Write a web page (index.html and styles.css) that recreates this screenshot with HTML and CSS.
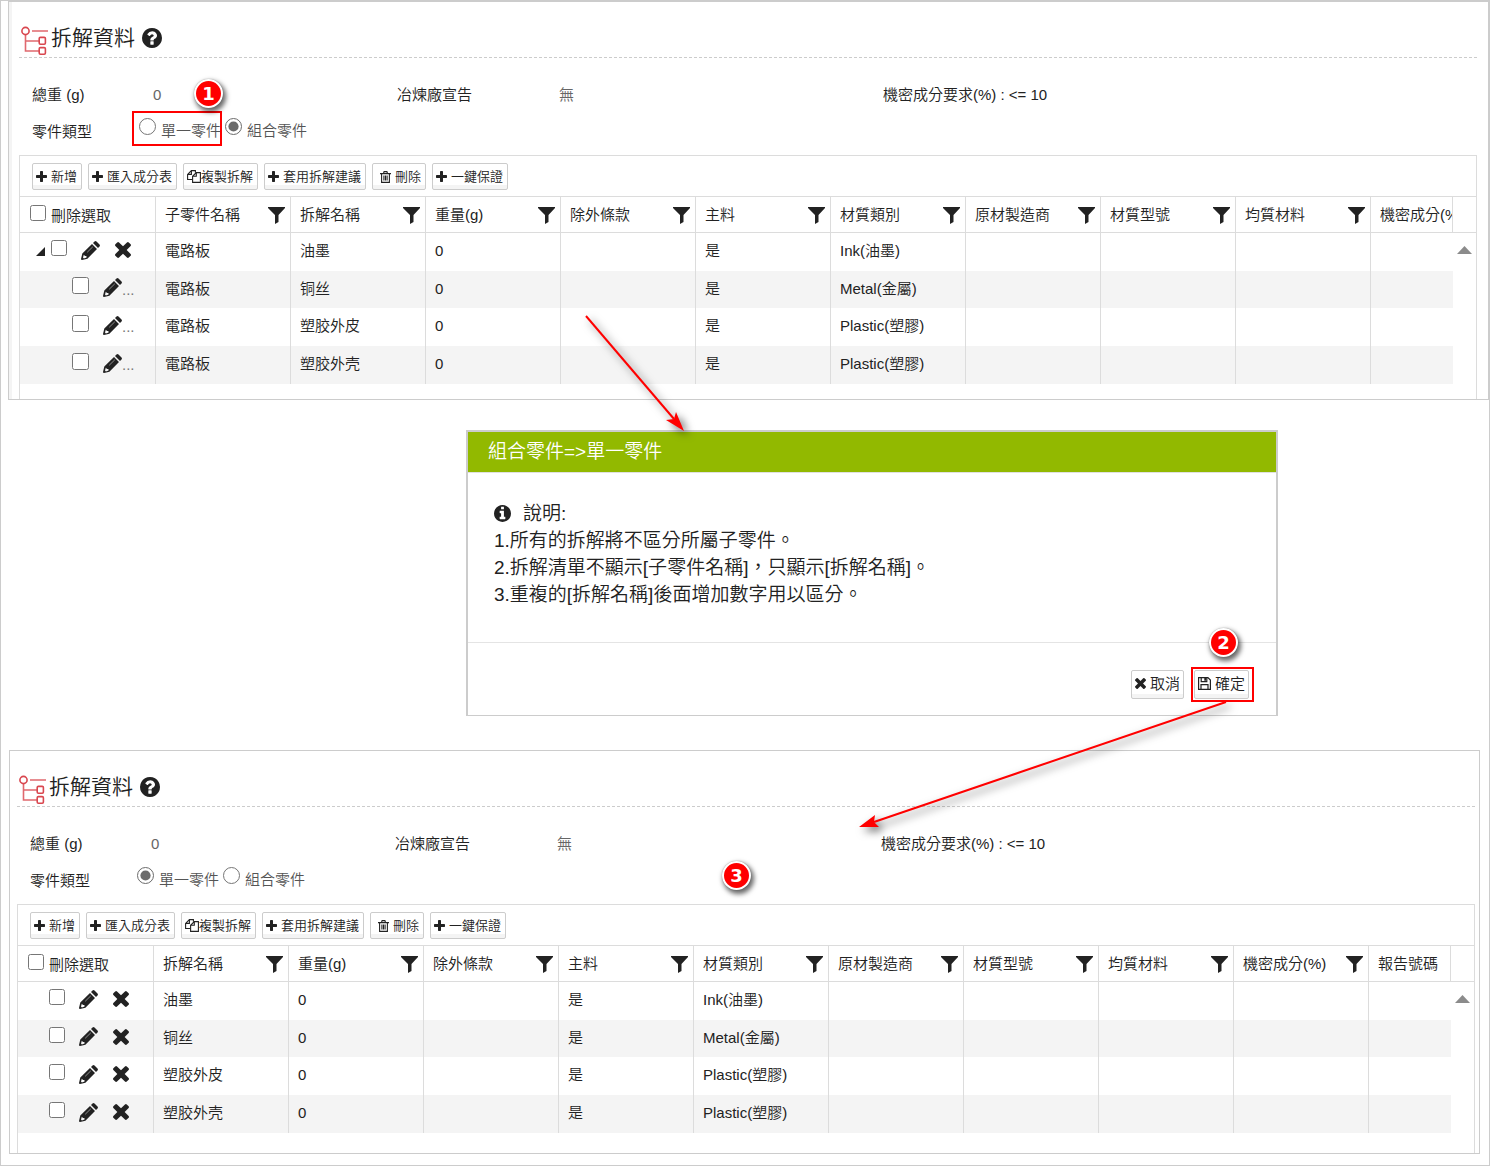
FILE: index.html
```html
<!DOCTYPE html>
<html lang="zh-Hant">
<head>
<meta charset="utf-8">
<title>拆解資料</title>
<link rel="stylesheet" href="styles.css">
</head>
<body>
<svg class="sprite" aria-hidden="true">
  <symbol id="plus" viewBox="192 128 1408 1408"><path d="M1600 736v192q0 40-28 68t-68 28h-416v416q0 40-28 68t-68 28h-192q-40 0-68-28t-28-68v-416h-416q-40 0-68-28t-28-68v-192q0-40 28-68t68-28h416v-416q0-40 28-68t68-28h192q40 0 68 28t28 68v416h416q40 0 68 28t28 68z"/></symbol>
  <symbol id="times" viewBox="302 366 1188 1188"><path d="M1490 1322q0 40-28 68l-136 136q-28 28-68 28t-68-28l-294-294-294 294q-28 28-68 28t-68-28l-136-136q-28-28-28-68t28-68l294-294-294-294q-28-28-28-68t28-68l136-136q28-28 68-28t68 28l294 294 294-294q28-28 68-28t68 28l136 136q28 28 28 68t-28 68l-294 294 294 294q28 28 28 68z"/></symbol>
  <symbol id="help" viewBox="128 128 1536 1536"><path d="M1024 1376v-192q0-14-9-23t-23-9h-192q-14 0-23 9t-9 23v192q0 14 9 23t23 9h192q14 0 23-9t9-23zm256-672q0-88-55.500-163t-138.500-116-170-41q-243 0-371 213-15 24 8 42l132 100q7 6 19 6 16 0 25-12 53-68 86-92 34-24 86-24 48 0 85.500 26t37.500 59q0 38-20 61t-68 45q-63 28-115.500 86.500t-52.500 125.500v36q0 14 9 23t23 9h192q14 0 23-9t9-23q0-19 21.500-49.500t54.500-49.500q32-18 49-28.500t46-35 44.500-48 28-60.500 12.500-81zm384 192q0 209-103 385.500t-279.500 279.500-385.500 103-385.500-103-279.500-279.500-103-385.500 103-385.500 279.500-279.500 385.500-103 385.500 103 279.500 279.500 103 385.500z"/></symbol>
  <symbol id="info" viewBox="128 128 1536 1536"><path d="M1152 1376v-160q0-14-9-23t-23-9h-96v-512q0-14-9-23t-23-9h-320q-14 0-23 9t-9 23v160q0 14 9 23t23 9h96v320h-96q-14 0-23 9t-9 23v160q0 14 9 23t23 9h448q14 0 23-9t9-23zm-128-896v-160q0-14-9-23t-23-9h-192q-14 0-23 9t-9 23v160q0 14 9 23t23 9h192q14 0 23-9t9-23zm640 416q0 209-103 385.500t-279.500 279.500-385.500 103-385.500-103-279.500-279.500-103-385.500 103-385.500 279.500-279.500 385.500-103 385.500 103 279.500 279.500 103 385.500z"/></symbol>
  <symbol id="filter" viewBox="0 0 17 17"><path d="M0 0h17v1l-6.500 7v7L7 17V8L0 1z"/></symbol>
  <symbol id="pencil" viewBox="0 0 19 19"><path fill-rule="evenodd" d="M1.300 12.600 11 3l5 5-9.600 9.700L1 19q-1 0-1-1zM2.800 13.800l-.8 2.600.9 1 2.700-.8-.2-1.600-1.400-.1z"/><path d="m12 2 1.500-1.500q1-.8 2 0l3 3q.9 1 0 2L17 7z"/><path d="m6.200 11.300 5.600-5.500" stroke="#999" stroke-width=".9"/></symbol>
  <symbol id="copy" viewBox="0 0 14 13"><path fill="none" stroke="currentColor" stroke-width="1.100" d="M5 9.500H.6V4.400L4.400.6h4v2M4.400.6v3.800H.6M9.300 2.600h4.100v9.800H5.600V6.300zM9.300 2.600v3.700H5.600"/></symbol>
  <symbol id="trash" viewBox="0 0 11 12"><path fill="none" stroke="currentColor" stroke-width="1.100" d="M0 2.600h11M3.500 2.500l.6-1.900h2.800l.6 1.900M1.600 2.600v8.800h7.800V2.600M3.900 4.500v5M5.500 4.500v5M7.100 4.500v5"/></symbol>
  <symbol id="save" viewBox="0 0 13 13"><path fill="none" stroke="currentColor" stroke-width="1.200" d="M.6.6h9.300l2.500 2.500v9.300H.6zM3.200.6v4h5.600v-4M3 12.400V7.700h7v4.700"/><path d="M6.300 1h1.700v2.800H6.300z"/></symbol>
  <symbol id="tree" viewBox="0 0 28 29"><path fill="none" stroke="#e0686e" stroke-width="1.600" d="M11 5h16M4.500 9v16H18M4.500 15H18"/><g fill="none" stroke="#d9474f" stroke-width="1.600"><circle cx="4.500" cy="5" r="3.600"/><rect x="18.200" y="11.400" width="6.200" height="6.800" rx="1.200"/><rect x="18.200" y="21.600" width="6.200" height="6.600" rx="1.200"/></g></symbol>
</svg>

<main class="frame">
  <section class="panel panel-before">
    <header class="panel-head"><svg class="tree"><use href="#tree"/></svg><h2>拆解資料</h2><button class="icon-btn" aria-label="說明"><svg class="i20"><use href="#help"/></svg></button></header>
    <div class="info">
      <span>總重 (g)</span><span class="value">0</span><span>冶煉廠宣告</span><span class="value">無</span><span>機密成分要求(%) : &lt;= 10</span>
      <span>零件類型</span>
      <div class="options">
        <label><input type="radio" name="before">單一零件</label>
        <label><input type="radio" name="before" checked>組合零件</label>
      </div>
    </div>
    <div class="grid">
      <div class="toolbar">
        <button class="btn"><svg><use href="#plus"/></svg>新增</button>
        <button class="btn"><svg><use href="#plus"/></svg>匯入成分表</button>
        <button class="btn btn-copy"><svg><use href="#copy"/></svg>複製拆解</button>
        <button class="btn"><svg><use href="#plus"/></svg>套用拆解建議</button>
        <button class="btn btn-trash"><svg><use href="#trash"/></svg>刪除</button>
        <button class="btn"><svg><use href="#plus"/></svg>一鍵保證</button>
      </div>
      <div class="grid-body">
        <table>
          <colgroup><col class="c" span="10"><col></colgroup>
          <thead><tr>
            <th><label class="pick"><input type="checkbox">刪除選取</label></th>
            <th><div>子零件名稱<button class="icon-btn" aria-label="篩選"><svg class="i17"><use href="#filter"/></svg></button></div></th>
            <th><div>拆解名稱<button class="icon-btn" aria-label="篩選"><svg class="i17"><use href="#filter"/></svg></button></div></th>
            <th><div>重量(g)<button class="icon-btn" aria-label="篩選"><svg class="i17"><use href="#filter"/></svg></button></div></th>
            <th><div>除外條款<button class="icon-btn" aria-label="篩選"><svg class="i17"><use href="#filter"/></svg></button></div></th>
            <th><div>主料<button class="icon-btn" aria-label="篩選"><svg class="i17"><use href="#filter"/></svg></button></div></th>
            <th><div>材質類別<button class="icon-btn" aria-label="篩選"><svg class="i17"><use href="#filter"/></svg></button></div></th>
            <th><div>原材製造商<button class="icon-btn" aria-label="篩選"><svg class="i17"><use href="#filter"/></svg></button></div></th>
            <th><div>材質型號<button class="icon-btn" aria-label="篩選"><svg class="i17"><use href="#filter"/></svg></button></div></th>
            <th><div>均質材料<button class="icon-btn" aria-label="篩選"><svg class="i17"><use href="#filter"/></svg></button></div></th>
            <th><div>機密成分(%)</div></th>
          </tr></thead>
          <tbody>
            <tr><td><div class="actions"><button class="icon-btn toggle" aria-label="收合"></button><input type="checkbox" aria-label="選取"><button class="icon-btn" aria-label="編輯"><svg class="i19"><use href="#pencil"/></svg></button><button class="icon-btn" aria-label="刪除"><svg class="i16"><use href="#times"/></svg></button></div></td><td>電路板</td><td>油墨</td><td>0</td><td></td><td>是</td><td>Ink(油墨)</td><td></td><td></td><td></td><td></td></tr>
            <tr><td><div class="actions child"><input type="checkbox" aria-label="選取"><button class="icon-btn" aria-label="編輯"><svg class="i19"><use href="#pencil"/></svg></button><span>...</span></div></td><td>電路板</td><td>铜丝</td><td>0</td><td></td><td>是</td><td>Metal(金屬)</td><td></td><td></td><td></td><td></td></tr>
            <tr><td><div class="actions child"><input type="checkbox" aria-label="選取"><button class="icon-btn" aria-label="編輯"><svg class="i19"><use href="#pencil"/></svg></button><span>...</span></div></td><td>電路板</td><td>塑胶外皮</td><td>0</td><td></td><td>是</td><td>Plastic(塑膠)</td><td></td><td></td><td></td><td></td></tr>
            <tr><td><div class="actions child"><input type="checkbox" aria-label="選取"><button class="icon-btn" aria-label="編輯"><svg class="i19"><use href="#pencil"/></svg></button><span>...</span></div></td><td>電路板</td><td>塑胶外壳</td><td>0</td><td></td><td>是</td><td>Plastic(塑膠)</td><td></td><td></td><td></td><td></td></tr>
          </tbody>
        </table>
        <div class="gutter"><button class="icon-btn scroll-up" aria-label="向上捲動"></button></div>
      </div>
    </div>
  </section>

  <section class="dialog" role="dialog" aria-label="組合零件=&gt;單一零件">
    <h3>組合零件=&gt;單一零件</h3>
    <div class="dialog-text">
      <p class="note"><svg><use href="#info"/></svg>說明:</p>
      <p>1.所有的拆解將不區分所屬子零件。</p>
      <p>2.拆解清單不顯示[子零件名稱]，只顯示[拆解名稱]。</p>
      <p>3.重複的[拆解名稱]後面增加數字用以區分。</p>
    </div>
    <footer>
      <button class="btn"><svg><use href="#times"/></svg>取消</button>
      <button class="btn btn-save"><svg><use href="#save"/></svg>確定</button>
    </footer>
  </section>

  <section class="panel panel-after">
    <header class="panel-head"><svg class="tree"><use href="#tree"/></svg><h2>拆解資料</h2><button class="icon-btn" aria-label="說明"><svg class="i20"><use href="#help"/></svg></button></header>
    <div class="info">
      <span>總重 (g)</span><span class="value">0</span><span>冶煉廠宣告</span><span class="value">無</span><span>機密成分要求(%) : &lt;= 10</span>
      <span>零件類型</span>
      <div class="options">
        <label><input type="radio" name="after" checked>單一零件</label>
        <label><input type="radio" name="after">組合零件</label>
      </div>
    </div>
    <div class="grid">
      <div class="toolbar">
        <button class="btn"><svg><use href="#plus"/></svg>新增</button>
        <button class="btn"><svg><use href="#plus"/></svg>匯入成分表</button>
        <button class="btn btn-copy"><svg><use href="#copy"/></svg>複製拆解</button>
        <button class="btn"><svg><use href="#plus"/></svg>套用拆解建議</button>
        <button class="btn btn-trash"><svg><use href="#trash"/></svg>刪除</button>
        <button class="btn"><svg><use href="#plus"/></svg>一鍵保證</button>
      </div>
      <div class="grid-body">
        <table>
          <colgroup><col class="c" span="10"><col></colgroup>
          <thead><tr>
            <th><label class="pick"><input type="checkbox">刪除選取</label></th>
            <th><div>拆解名稱<button class="icon-btn" aria-label="篩選"><svg class="i17"><use href="#filter"/></svg></button></div></th>
            <th><div>重量(g)<button class="icon-btn" aria-label="篩選"><svg class="i17"><use href="#filter"/></svg></button></div></th>
            <th><div>除外條款<button class="icon-btn" aria-label="篩選"><svg class="i17"><use href="#filter"/></svg></button></div></th>
            <th><div>主料<button class="icon-btn" aria-label="篩選"><svg class="i17"><use href="#filter"/></svg></button></div></th>
            <th><div>材質類別<button class="icon-btn" aria-label="篩選"><svg class="i17"><use href="#filter"/></svg></button></div></th>
            <th><div>原材製造商<button class="icon-btn" aria-label="篩選"><svg class="i17"><use href="#filter"/></svg></button></div></th>
            <th><div>材質型號<button class="icon-btn" aria-label="篩選"><svg class="i17"><use href="#filter"/></svg></button></div></th>
            <th><div>均質材料<button class="icon-btn" aria-label="篩選"><svg class="i17"><use href="#filter"/></svg></button></div></th>
            <th><div>機密成分(%)<button class="icon-btn" aria-label="篩選"><svg class="i17"><use href="#filter"/></svg></button></div></th>
            <th><div>報告號碼</div></th>
          </tr></thead>
          <tbody>
            <tr><td><div class="actions flat"><input type="checkbox" aria-label="選取"><button class="icon-btn" aria-label="編輯"><svg class="i19"><use href="#pencil"/></svg></button><button class="icon-btn" aria-label="刪除"><svg class="i16"><use href="#times"/></svg></button></div></td><td>油墨</td><td>0</td><td></td><td>是</td><td>Ink(油墨)</td><td></td><td></td><td></td><td></td><td></td></tr>
            <tr><td><div class="actions flat"><input type="checkbox" aria-label="選取"><button class="icon-btn" aria-label="編輯"><svg class="i19"><use href="#pencil"/></svg></button><button class="icon-btn" aria-label="刪除"><svg class="i16"><use href="#times"/></svg></button></div></td><td>铜丝</td><td>0</td><td></td><td>是</td><td>Metal(金屬)</td><td></td><td></td><td></td><td></td><td></td></tr>
            <tr><td><div class="actions flat"><input type="checkbox" aria-label="選取"><button class="icon-btn" aria-label="編輯"><svg class="i19"><use href="#pencil"/></svg></button><button class="icon-btn" aria-label="刪除"><svg class="i16"><use href="#times"/></svg></button></div></td><td>塑胶外皮</td><td>0</td><td></td><td>是</td><td>Plastic(塑膠)</td><td></td><td></td><td></td><td></td><td></td></tr>
            <tr><td><div class="actions flat"><input type="checkbox" aria-label="選取"><button class="icon-btn" aria-label="編輯"><svg class="i19"><use href="#pencil"/></svg></button><button class="icon-btn" aria-label="刪除"><svg class="i16"><use href="#times"/></svg></button></div></td><td>塑胶外壳</td><td>0</td><td></td><td>是</td><td>Plastic(塑膠)</td><td></td><td></td><td></td><td></td><td></td></tr>
          </tbody>
        </table>
        <div class="gutter"><button class="icon-btn scroll-up" aria-label="向上捲動"></button></div>
      </div>
    </div>
  </section>

  <svg class="arrows" width="1300" height="900" viewBox="1 1 1300 900" aria-hidden="true">
    <g class="arrow"><path d="M586 316 674 419" stroke="red" stroke-width="2"/><path fill="red" d="M684 431 676 412 674 419 666 420z"/></g>
    <g class="arrow"><path d="M1226 702 874 822" stroke="red" stroke-width="2"/><path fill="red" d="M859 827 875 815 874 822 879 827z"/></g>
  </svg>
  <div class="mark mark-type"></div>
  <div class="mark mark-ok"></div>
  <span class="badge badge-1">1</span>
  <span class="badge badge-2">2</span>
  <span class="badge badge-3">3</span>
</main>
</body>
</html>
```
FILE: styles.css
```css
* { box-sizing: border-box; }
body {
  margin: 0;
  background: #fff;
  color: #222;
  font: 350 15px/20px "Liberation Sans", "Noto Sans CJK TC", sans-serif;
}
h2, h3, p { margin: 0; font-weight: inherit; }
input { margin: 0; flex: none; accent-color: #6b6b6b; }
button { font: inherit; color: inherit; }
svg { display: block; flex: none; fill: currentColor; }
.sprite { position: absolute; width: 0; height: 0; }
.i16 { width: 16px; height: 16px; }
.i17 { width: 17px; height: 17px; }
.i19 { width: 19px; height: 19px; }
.i20 { width: 20px; height: 20px; }
.icon-btn { padding: 0; border: 0; background: none; color: #222; }

.frame {
  position: relative;
  min-height: 100vh;
  padding-bottom: 11px;
  border: 1px solid #ccc;
}

/* Panels */
.panel { display: flex; flex-direction: column; border: 1px solid #ccc; }
.panel-before {
  min-height: 399px;
  margin-left: 7px;
  padding: 0 11px 0 10px;
  box-shadow: inset 3px 0 #f4f4f4;
}
.panel-after {
  min-height: 404px;
  margin: 0 9px 0 8px;
  padding: 0 4px 0 7px;
}
.panel-head {
  display: flex;
  align-items: center;
  height: 56px;
  padding: 21px 2px 0;
  border-bottom: 1px dashed #ccc;
}
.panel-head h2 {
  margin: 0 7px 0 2px;
  padding-bottom: 4px;
  font-size: 21px;
  line-height: 28px;
}
.panel-head .icon-btn { padding-bottom: 4px; }
.tree { width: 28px; height: 29px; }

.info {
  display: grid;
  grid-template-columns: 121fr 244fr 162fr 324fr 594fr;
  row-gap: 17px;
  padding: 27px 0 13px 13px;
  white-space: nowrap;
}
.value { color: #666; }
.options { display: flex; align-items: flex-start; gap: 4px; height: 20px; margin-left: -14px; color: #555; }
.options label { display: flex; align-items: center; gap: 5px; height: 17px; }
.options input { width: 17px; height: 17px; margin-bottom: 8px; }

/* Grid */
.grid {
  flex: 1;
  border: 1px solid #dcdcdc;
  border-bottom: 0;
}
.toolbar { display: flex; gap: 6px; height: 40px; padding: 7px 12px 0; }
.btn {
  display: flex;
  align-items: center;
  gap: 4px;
  height: 27px;
  padding: 0 4px 0 3px;
  border: 1px solid #ccc;
  border-radius: 2px;
  background: linear-gradient(#fff 85%, #f4f4f4 85%);
  font-size: 13px;
  white-space: nowrap;
}
.btn svg { width: 11px; height: 11px; }
.btn-copy { gap: 0; }
.btn-copy svg { width: 14px; height: 13px; }
.btn-trash { padding-left: 7px; }
.btn-trash svg { height: 12px; }

.grid-body { display: flex; }
table {
  flex: 1;
  width: 0;
  table-layout: fixed;
  border-spacing: 0;
}
.c { width: 135px; }
th, td {
  overflow: hidden;
  padding: 0 5px 2px 9px;
  border-left: 1px solid #dcdcdc;
  text-align: left;
  white-space: nowrap;
}
th:first-child, td:first-child { padding: 0; border-left: 0; }
th {
  height: 37px;
  padding: 1px 5px 0 9px;
  border-top: 1px solid #dcdcdc;
  border-bottom: 1px solid #dcdcdc;
  font-weight: inherit;
}
th:last-child { padding-right: 0; border-right: 1px solid #dcdcdc; }
th div { display: flex; align-items: center; justify-content: space-between; }
td { height: 38px; }
tr:nth-child(even) td { background: #f4f4f4; }
tr:nth-child(2) td { height: 37px; }
input[type="checkbox"] { width: 16px; height: 16px; }
.pick { display: flex; align-items: center; gap: 5px; padding: 3px 0 0 10px; }
.pick input { margin-bottom: 6px; }
.actions { display: flex; align-items: center; padding: 0 0 4px 16px; }
.actions input { margin: 0 14px 4px 0; }
.actions .icon-btn + .icon-btn { margin-left: 15px; }
.actions.flat { padding-left: 31px; }
.actions.child { padding-left: 52px; }
.actions.child input { width: 17px; height: 17px; }
.actions span { padding-top: 4px; color: #777; }
.actions .toggle { width: 15px; height: 9px; margin-top: 3px; }
.toggle::before {
  content: "";
  display: block;
  width: 9px;
  height: 9px;
  background: #222;
  clip-path: polygon(100% 0, 100% 100%, 0 100%);
}
.gutter { width: 23px; border-top: 1px solid #dcdcdc; }
.gutter::before { content: ""; display: block; height: 36px; border-bottom: 1px solid #dcdcdc; box-sizing: border-box; }
.scroll-up {
  display: block;
  width: 15px;
  height: 8px;
  margin: 13px auto 0;
  background: #8b8b8b;
  clip-path: polygon(50% 0, 100% 100%, 0 100%);
}

/* Dialog */
.dialog {
  width: 812px;
  margin: 30px 0 34px 465px;
  border: 2px solid #ccc;
  border-bottom-width: 1px;
  background: #fff;
}
.dialog h3 {
  height: 41px;
  padding: 6px 20px;
  border-bottom: 1px solid #e0e0e0;
  background: #92b900;
  background-clip: padding-box;
  color: #fff;
  font-size: 19px;
  line-height: 27px;
}
.dialog-text { padding: 27px 26px 34px; font-size: 19px; line-height: 27px; }
.note { display: flex; align-items: center; gap: 12px; }
.note svg { width: 17px; height: 17px; }
.dialog footer {
  display: flex;
  justify-content: flex-end;
  gap: 10px;
  height: 73px;
  padding: 27px 27px 0;
  border-top: 1px solid #e4e4e4;
}
.dialog .btn { height: 29px; padding: 0 3px 2px; font-size: 15px; }
.dialog .btn-save svg { width: 13px; height: 13px; }

/* Step annotations */
.arrows { position: absolute; top: 0; left: 0; pointer-events: none; }
.arrow { filter: drop-shadow(4px 4px 4px rgba(0, 0, 0, .6)); }
.mark { position: absolute; border: 2px solid #f00; pointer-events: none; }
.mark-type { top: 110px; left: 131px; width: 90px; height: 35px; }
.mark-ok { top: 666px; left: 1190px; width: 63px; height: 35px; }
.badge {
  position: absolute;
  width: 29px;
  height: 29px;
  border: 2px solid #fff;
  border-radius: 50%;
  background: #f00;
  box-shadow: 2px 3px 5px 1px rgba(0, 0, 0, .6), 0 0 1px #999;
  color: #fff;
  font: bold 18px/25px "DejaVu Sans", sans-serif;
  text-align: center;
}
.badge-1 { top: 78px; left: 193px; }
.badge-2 { top: 627px; left: 1208px; }
.badge-3 { top: 860px; left: 721px; }
```
